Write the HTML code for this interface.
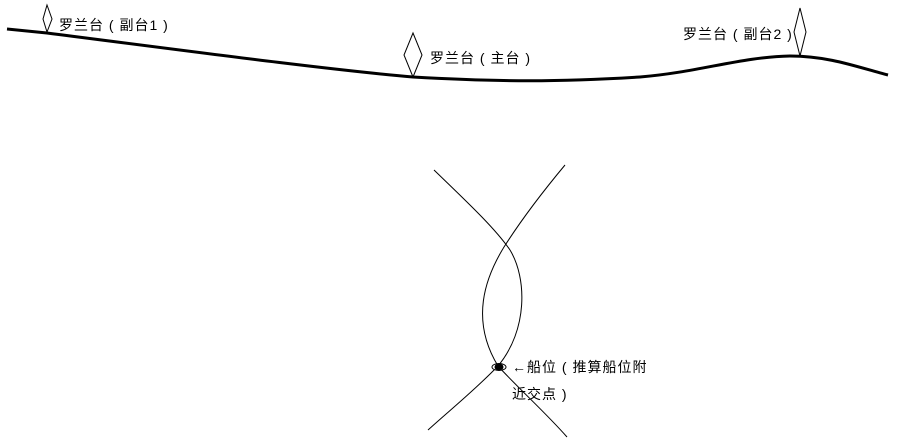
<!DOCTYPE html>
<html><head><meta charset="utf-8"><style>
html,body{margin:0;padding:0;background:#fff;width:912px;height:441px;overflow:hidden}
svg{display:block}
text{font-family:"Liberation Sans","Noto Sans CJK SC",sans-serif;font-size:14px;fill:#000;letter-spacing:1px}
</style></head><body>
<svg width="912" height="441" viewBox="0 0 912 441">
<path d="M7,29 L47,33 C180,50 330,70 413,77 C500,82 560,82 640,77 C700,72 740,57 790,56 C830,56 860,68 888,75" fill="none" stroke="#000" stroke-width="3"/>
<path d="M47,5 L52,19 L47,32 L43,19 Z" fill="#fff" stroke="#000" stroke-width="1"/>
<path d="M413,33 L422,55 L413,77 L404,55 Z" fill="#fff" stroke="#000" stroke-width="1"/>
<path d="M800,8 L806,32 L800,56 L794,32 Z" fill="#fff" stroke="#000" stroke-width="1"/>
<text x="59" y="30">罗兰台 ( 副台1 )</text>
<text x="430" y="63">罗兰台 ( 主台 )</text>
<text x="683" y="39">罗兰台 ( 副台2 )</text>
<path d="M434,170 C465,200 495,228 510,250 C527,278 528,330 498,366 C475,390 450,410 428,430" fill="none" stroke="#000" stroke-width="1"/>
<path d="M565,165 C540,195 518,225 504,247 C485,278 470,320 498,366 C520,390 545,412 567,437" fill="none" stroke="#000" stroke-width="1"/>
<ellipse cx="499" cy="367" rx="7" ry="3.5" fill="#fff" stroke="#000" stroke-width="1"/>
<ellipse cx="499" cy="367" rx="4.5" ry="3.5" fill="#000"/>
<text x="512" y="372">←船位 ( 推算船位附</text>
<text x="512" y="399">近交点 )</text>
</svg>
</body></html>
